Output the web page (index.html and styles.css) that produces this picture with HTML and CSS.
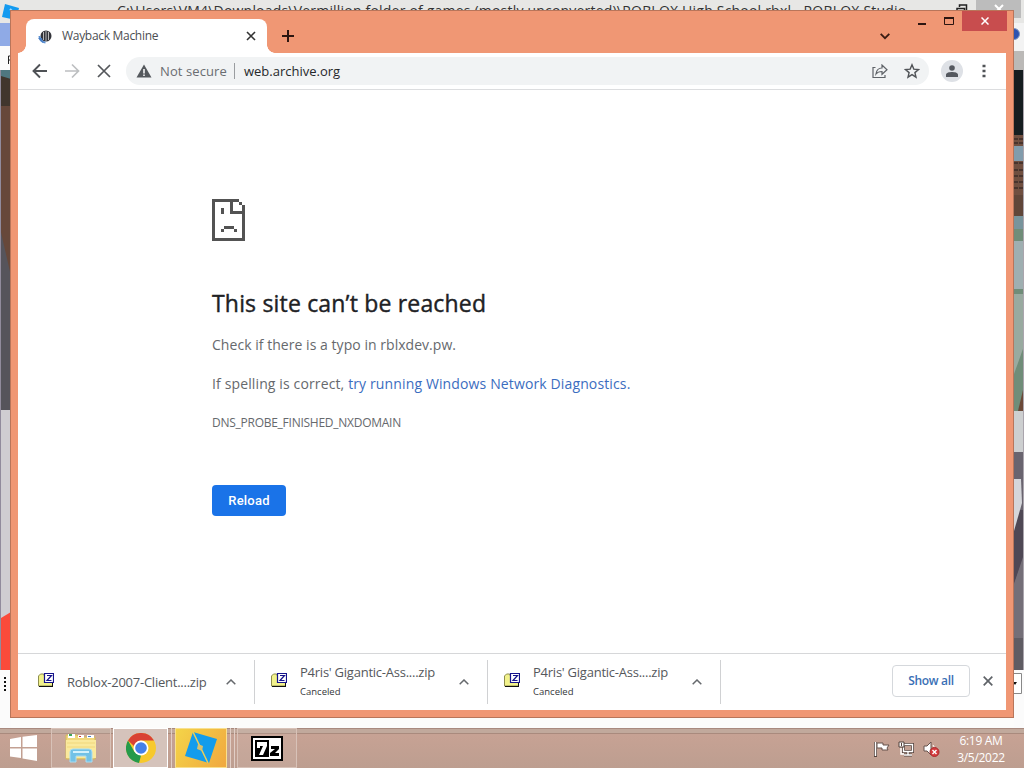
FILE: index.html
```html
<!doctype html>
<html lang="en">
<head>
  <meta charset="utf-8">
  <title>web.archive.org</title>
  <link rel="stylesheet" href="styles.css">
</head>
<body>
<div class="desktop">

  <!-- Studio window behind the browser -->
  <div class="studio">
    <div class="studio-title">
      <svg class="studio-logo" width="18" height="18" viewBox="0 0 18 18"><path d="M3 2l14 4-3 12L0 15z" fill="#149bf0"/><path d="M8 7l4 4" stroke="#a5dcff" stroke-width="2"/></svg>
      <span class="studio-path">C:\Users\VM4\Downloads\Vermillion folder of games (mostly unconverted)\ROBLOX High School.rbxl - ROBLOX Studio</span>
      <svg class="studio-restore" width="12" height="12" viewBox="0 0 12 12"><path d="M3.500 3V1h7v8H9M1 4.500h7.500V12H1z" fill="none" stroke="#222" stroke-width="1.500"/></svg>
      <span class="studio-close"><svg width="10" height="10" viewBox="0 0 10 10"><path d="M1 1l8 8M9 1L1 9" stroke="#fff" stroke-width="2"/></svg></span>
    </div>
    <div class="studio-body">
      <svg width="11" height="705" viewBox="0 23 11 705">
        <path d="M0 23h11v23H0z" fill="#8faae6"/>
        <path d="M0 46h11v24H0z" fill="#fbfbfb"/>
        <path d="M8.500 64v-8H11M8.500 60H11" fill="none" stroke="#222"/>
        <path d="M0 70h11v36H0z" fill="#41362d"/>
        <path d="M1 70h10v9L1 76z" fill="#4f7780"/>
        <path d="M0 106h11v304H0z" fill="#67483a"/>
        <path d="M0 228l11 48v134H0z" fill="#56545b"/>
        <path d="M0 410h11v208H0z" fill="#cfcdd1"/>
        <path d="M1 618l10-6v58H1z" fill="#fa4b3a"/>
        <path d="M0 670h11v58H0z" fill="#fbfbfb"/>
        <path d="M5 677v14" stroke="#111" stroke-width="2" stroke-dasharray="2"/>
        <path d="M0 70h1v600H0z" fill="#918b9c"/>
      </svg>
      <svg width="10" height="705" viewBox="1014 23 10 705">
        <path d="M1014 23h10v28h-10z" fill="#f3f3f3"/>
        <circle cx="1014" cy="34" r="5.500" fill="#2d53b0" stroke="#8296be"/>
        <path d="M1014 51h10v19h-10z" fill="#bbb9b7"/>
        <path d="M1014 70h10v65h-10z" fill="#151d20"/>
        <path d="M1014 135h10v11h-10zM1014 161h10v34h-10z" fill="#704f40"/>
        <path d="M1014 146h10v15h-10z" fill="#829cac"/>
        <path d="M1014 139h10M1014 143h10M1014 163h10M1014 170h10M1014 176h10M1014 182h10M1014 188h10" stroke="#3c2c27" stroke-width="1.500" stroke-dasharray="4 1"/>
        <path d="M1014 195h10v21h-10z" fill="#604639"/>
        <path d="M1014 216h10v13h-10z" fill="#78949c"/>
        <path d="M1014 229h10v182h-10z" fill="#708d79"/>
        <path d="M1014 241h10v48h-10z" fill="#9fafb1"/>
        <path d="M1014 294h10v52l-10 28z" fill="#99aaa0"/>
        <path d="M1023 390l-5 21h6v-21z" fill="#6b4938"/>
        <path d="M1014 411h10v41h-10z" fill="#cdcfd0"/>
        <path d="M1014 452h10v132h-10z" fill="#69646f"/>
        <path d="M1014 510h10v47l-10 27z" fill="#4f4855"/>
        <path d="M1014 479h7l1 24-8 28z" fill="#d5d6da"/>
        <path d="M1023 557v112h-9v-85z" fill="#746f78"/>
        <path d="M1014 638h10v32h-10z" fill="#5f5c63"/>
        <path d="M1014 670h10v58h-10z" fill="#fbfbfb"/>
        <path d="M1013 673.500h8.500v20H1013" fill="#fff" stroke="#888"/>
        <path d="M1013 682h4l-2 3z" fill="#111"/>
        <path d="M1023 70h1v600h-1z" fill="#aaa5ad"/>
      </svg>
    </div>
  </div>

  <div class="browser">
    <div class="tabstrip">
      <div class="tab">
        <svg class="tab-icon" width="16" height="16" viewBox="0 0 16 16"><circle cx="9" cy="8" r="5.500" fill="#33343a"/><path d="M6.500 4v8M9 3v10M11.500 4v8" stroke="#b9b9b9"/><path d="M2.500 8c0 4 2 6 6 6.500" fill="none" stroke="#5b8fd0" stroke-width="2"/><path d="M1 10l5 5-1-5z" fill="#477dc4"/></svg>
        <span class="tab-title">Wayback Machine</span>
        <svg width="10" height="10" viewBox="0 0 10 10"><path d="M1 1l8 8M9 1L1 9" stroke="#333" stroke-width="1.600"/></svg>
      </div>
      <svg class="new-tab" width="12" height="12" viewBox="0 0 12 12"><path d="M6 0v12M0 6h12" stroke="#2d1510" stroke-width="2"/></svg>
      <svg class="tab-search" width="10" height="7" viewBox="0 0 10 7"><path d="M.7.800L5 5.200 9.300.8" fill="none" stroke="#3a1c13" stroke-width="1.800"/></svg>
      <div class="win-buttons">
        <svg class="win-min" width="8" height="3" viewBox="0 0 8 3"><path d="M0 0h8v2H0z" fill="#2d1510"/></svg>
        <svg class="win-max" width="10" height="8" viewBox="0 0 10 8"><path d="M.5 1h9v6.500h-9z" fill="none" stroke="#2d1510"/><path d="M0 0h10v2H0z" fill="#2d1510"/></svg>
        <span class="win-close"><svg width="8" height="8" viewBox="0 0 8 8"><path d="M.5.500l7 7M7.500.500l-7 7" stroke="#fff" stroke-width="1.500"/></svg></span>
      </div>
    </div>

    <div class="toolbar">
      <svg width="16" height="16" viewBox="0 0 16 16"><path d="M15 8H2M8 1.500L1.500 8 8 14.500" fill="none" stroke="#4f5256" stroke-width="1.900"/></svg>
      <svg width="16" height="16" viewBox="0 0 16 16"><path d="M1 8h13M8 1.500L14.500 8 8 14.500" fill="none" stroke="#bdbfc1" stroke-width="1.700"/></svg>
      <svg width="16" height="16" viewBox="0 0 16 16"><path d="M2 2l12 12M14 2L2 14" stroke="#54575b" stroke-width="1.700"/></svg>
      <div class="omnibox">
        <svg width="16" height="14" viewBox="0 0 16 14"><path d="M8 .5L15.500 13.500H.5z" fill="#55595d"/><path d="M8 5v4.500M8 10.500V12" stroke="#fff" stroke-width="1.500"/></svg>
        <span class="not-secure">Not secure</span>
        <span class="address">web.archive.org</span>
        <svg class="share" width="16" height="14" viewBox="0 0 16 14"><path d="M3.500 3.500H1v10h12V11" fill="none" stroke="#5f6368" stroke-width="1.200"/><path d="M4 10c.5-4 2.700-6 6-6V1l5 4.700-5 4.600V7.500C7.500 7.500 5.500 8 4 10z" fill="none" stroke="#5f6368" stroke-width="1.200"/></svg>
        <svg width="16" height="16" viewBox="0 0 16 16"><path d="M8 1.800l1.800 4.300 4.700.4-3.600 3.100 1.100 4.600L8 11.700l-4 2.500 1.100-4.600L1.500 6.500l4.700-.4z" fill="none" stroke="#505357" stroke-width="1.400"/></svg>
      </div>
      <span class="avatar"><svg width="12" height="12" viewBox="0 0 12 12"><circle cx="6" cy="3" r="2.800" fill="#54585f"/><path d="M0 12V9.600C0 7.500 3.500 6.900 6 6.900s6 .6 6 2.700V12z" fill="#54585f"/></svg></span>
      <svg width="4" height="14" viewBox="0 0 4 14"><path d="M.5.700h3v2.600h-3zM.5 5.700h3v2.600h-3zM.5 10.700h3v2.600h-3z" fill="#505357"/></svg>
    </div>

    <div class="page">
      <svg class="sad" width="33" height="42" viewBox="0 0 11 14" shape-rendering="crispEdges"><path d="M0 0h9v1H1v12h9V5H6V1h1v3h3V2h1v12H0zM9 1h1v1H9zM3 3h1v2H3zM4 9h3.300v1H4zM3 10h1v1H3zM7.300 10h1v1h-1z" fill="#535353"/></svg>
      <h1>This site can’t be reached</h1>
      <p class="hint">Check if there is a typo in rblxdev.pw.</p>
      <p class="hint spelling">If spelling is correct, <a href="#">try running Windows Network Diagnostics.</a></p>
      <p class="error-code">DNS_PROBE_FINISHED_NXDOMAIN</p>
      <button class="reload">Reload</button>
    </div>

    <div class="downloads">
      <div class="download">
        <svg class="zip" width="16" height="14" viewBox="0 0 16 14"><use href="#zip-icon"/></svg>
        <div class="file"><span class="name">Roblox-2007-Client....zip</span></div>
        <svg class="caret" width="10" height="6" viewBox="0 0 10 6"><path d="M.7 5.300L5 1l4.300 4.300" fill="none" stroke="#66696d" stroke-width="1.500"/></svg>
      </div>
      <div class="download">
        <svg class="zip" width="16" height="14" viewBox="0 0 16 14"><use href="#zip-icon"/></svg>
        <div class="file canceled"><span class="name">P4ris' Gigantic-Ass....zip</span><span class="state">Canceled</span></div>
        <svg class="caret" width="10" height="6" viewBox="0 0 10 6"><path d="M.7 5.300L5 1l4.300 4.300" fill="none" stroke="#66696d" stroke-width="1.500"/></svg>
      </div>
      <div class="download">
        <svg class="zip" width="16" height="14" viewBox="0 0 16 14"><use href="#zip-icon"/></svg>
        <div class="file canceled"><span class="name">P4ris' Gigantic-Ass....zip</span><span class="state">Canceled</span></div>
        <svg class="caret" width="10" height="6" viewBox="0 0 10 6"><path d="M.7 5.300L5 1l4.300 4.300" fill="none" stroke="#66696d" stroke-width="1.500"/></svg>
      </div>
      <button class="show-all">Show all</button>
      <svg class="close-bar" width="10" height="10" viewBox="0 0 10 10"><path d="M.7.700l8.600 8.600M9.300.700L.7 9.300" stroke="#5f6368" stroke-width="1.700"/></svg>
    </div>
  </div>

  <div class="taskbar">
    <div class="start"><svg width="27" height="26" viewBox="0 0 27 26"><path d="M0 4l11-2v10H0zM12.500 1.700L27 0v12H12.500zM0 13.500h11V23L0 21.500zM12.500 13.500H27V26l-14.500-2.500z" fill="#fff"/></svg></div>
    <div class="task explorer">
      <svg width="32" height="30" viewBox="0 0 32 30"><path d="M1 2h11l2 2h16v22H1z" fill="#f1d77b" stroke="#d2b85c"/><path d="M3 1h7v4H3zM13 2h6v3h-6zM22 2h7v3h-7z" fill="#fff"/><path d="M4 1h3v2H4z" fill="#42a65a"/><path d="M14 3h2v1h-2z" fill="#c33"/><path d="M23 3h3v1h-3z" fill="#4a7fc4"/><path d="M1 7h30v18H1z" fill="#fae99c"/><path d="M2 10h28M2 14h28" stroke="#f0d77c"/><path d="M5 29V19q0-3 3-3h16q3 0 3 3v10h-6v-6H11v6z" fill="#72c2e6" stroke="#a9ddf2"/><path d="M8 19h16" stroke="#d3f1fb" stroke-width="2"/></svg>
    </div>
    <div class="task chrome">
      <svg width="30" height="30" viewBox="0 0 30 30"><circle cx="15" cy="15" r="15" fill="#f7c92c"/><path d="M2 7.500L8.500 19 15 22.500 13 30A15 15 0 0 1 2 7.500z" fill="#249a4c"/><path d="M2 7.500A15 15 0 0 1 28 7.500H15q-5 0-6.500 6z" fill="#d94235"/><circle cx="15" cy="15" r="7.500" fill="#fff"/><circle cx="15" cy="15" r="5.800" fill="#4580e8"/></svg>
    </div>
    <div class="task-stack"></div>
    <div class="task roblox">
      <svg width="32" height="32" viewBox="0 0 32 32"><path d="M8 0l24 7-8 24L0 24z" fill="#139cec"/><path d="M8 0l15 31" stroke="#efcf55" stroke-width="1.500"/><path d="M13 12l5 2-1 5-5-2z" fill="#d8c16e"/></svg>
    </div>
    <div class="task-stack"></div>
    <div class="task-stack"></div>
    <div class="task seven">
      <svg width="32" height="25" viewBox="0 0 32 25"><path d="M0 0h32v25H0z" fill="#000"/><path d="M2 2h28v21H2z" fill="#fff"/><path d="M4 4h14v17H4z" fill="#000"/><path d="M6 6h10v4l-4 9H8l4-9H9v2H6z" fill="#fff"/><path d="M20 10h8v3l-4 4h4v3h-9v-3l5-4h-4z" fill="#000"/></svg>
    </div>
    <div class="tray">
      <svg width="16" height="16" viewBox="0 0 16 16"><path d="M1.500 1v15" stroke="#53423c" stroke-width="3"/><path d="M3 2h6v2h6l-2 3 1 2H8V7H3z" fill="#fff" stroke="#66534c"/><path d="M1.500 1v14" stroke="#fff" stroke-width="1.500"/></svg>
      <svg width="17" height="16" viewBox="0 0 17 16"><path d="M5.500 3.500h9v7h-9zM10 10v4M6 14h8" fill="none" stroke="#53423c" stroke-width="3"/><path d="M5.500 3.500h9v7h-9zM10 10v4M6 14h8M3 7v6h3" fill="none" stroke="#fff" stroke-width="1.400"/><path d="M1 1h5v5H1z" fill="#fff" stroke="#53423c"/><path d="M3.500 2v3" stroke="#53423c"/></svg>
      <svg width="17" height="16" viewBox="0 0 17 16"><path d="M1 5h3l4-4v13l-4-4H1z" fill="#fff" stroke="#66534c"/><path d="M10 4q2 2 1 5" fill="none" stroke="#fff"/><circle cx="11.500" cy="11" r="4.500" fill="#d53a3c" stroke="#a82d2f"/><path d="M9.500 9l4 4M13.500 9l-4 4" stroke="#fff" stroke-width="1.400"/></svg>
    </div>
    <div class="clock"><span>6:19 AM</span><span>3/5/2022</span></div>
  </div>
</div>

<svg class="defs" width="0" height="0">
  <symbol id="zip-icon" viewBox="0 0 16 14">
    <path d="M.5 3l2-2h3l1 2h8v10H.5z" fill="#f2f28c" stroke="#8e8e4d"/>
    <path d="M1 13.500h14M14.500 10v4" stroke="#111"/>
    <path d="M6.500.500h9v9h-9z" fill="#fff" stroke="#15138c" stroke-width="1.200"/>
    <path d="M9 2.500h4.500l-4.500 5h4.500" fill="none" stroke="#15138c" stroke-width="1.200"/>
  </symbol>
</svg>
</body>
</html>
```
FILE: styles.css
```css
:root {
  --frame: #f09774;
  --frame-line: #b9755a;
  --ui-font: "Open Sans", "Noto Sans", sans-serif;
}
* { box-sizing: border-box; }
body { margin: 0; font-family: var(--ui-font); overflow: hidden; }
svg { display: block; flex: none; }
span { white-space: nowrap; }
.defs { position: absolute; }

.desktop {
  position: relative;
  display: flex; flex-direction: column;
  width: 1024px; height: 768px;
  background: #fcfcfb;
}

/* studio window */
.studio { height: 728px; display: flex; flex-direction: column; }
.studio-title {
  display: flex; align-items: flex-start;
  height: 23px; padding-left: 2px;
  background: #e7e7e5;
}
.studio-logo { margin-top: 2px; }
.studio-path {
  width: 794px; margin-left: 97px;
  font-size: 14px; line-height: 22px; letter-spacing: 0.2px; color: #333;
}
.studio-restore { margin: 4px 0 0 45px; }
.studio-close {
  display: flex; justify-content: center;
  width: 45px; height: 18px; margin-left: 8px; padding-top: 4px;
  background: #bcbcbc;
}
.studio-body { display: flex; justify-content: space-between; }

/* browser window */
.browser {
  position: absolute; left: 10px; top: 10px;
  display: flex; flex-direction: column;
  width: 1004px; height: 708px;
  padding: 0 7px 7px;
  background: var(--frame);
  border: 1px solid var(--frame-line);
}
.tabstrip { display: flex; height: 42px; padding-left: 8px; }
.tab {
  position: relative;
  display: flex; align-items: center;
  flex: none; width: 241px; height: 34px; margin-top: 8px; padding: 0 11px;
  background: #fff;
  border-radius: 8px 8px 0 0;
}
.tab::before, .tab::after {
  content: ""; position: absolute; bottom: 0;
  width: 8px; height: 8px;
}
.tab::before { left: -8px; background: radial-gradient(circle at 0 0, transparent 7.5px, #fff 8px); }
.tab::after { right: -8px; background: radial-gradient(circle at 100% 0, transparent 7.5px, #fff 8px); }
.tab-title {
  flex: 1; margin-left: 9px; padding-bottom: 1px;
  font-size: 12px; letter-spacing: -0.3px; color: #4b4e52;
}
.new-tab { margin: 19px 0 0 15px; }
.tab-search { margin: 22px 0 0 586px; }
.win-buttons { display: flex; margin-left: 28px; }
.win-min { margin-top: 12px; }
.win-max { margin: 6px 0 0 18px; }
.win-close {
  display: flex; align-items: center; justify-content: center;
  width: 45px; height: 20px; margin-left: 8px;
  background: #c84d4e;
}
.toolbar {
  display: flex; align-items: center; gap: 16px;
  height: 37px; padding: 0 20px 0 14px;
  background: #fff; border-bottom: 1px solid #dcdddf;
}
.omnibox {
  flex: 1; display: flex; align-items: center;
  height: 28px; margin-left: -2px; margin-right: -4px; padding: 0 9px 0 10px;
  background: #f1f3f4; border-radius: 14px;
  font-size: 13px;
}
.not-secure {
  margin-left: 8px; padding-right: 7px;
  border-right: 1px solid #9a9da0;
  line-height: 16px; letter-spacing: 0.1px; color: #6a6d71;
}
.address { flex: 1; margin-left: 9px; color: #26282b; }
.share { margin-right: 16px; }
.avatar {
  display: flex; align-items: center; justify-content: center;
  width: 22px; height: 22px; margin-right: 3px;
  background: #dee1e6; border-radius: 50%;
}

/* error page */
.page {
  flex: 1; display: flex; flex-direction: column; align-items: flex-start;
  padding: 109px 0 0 194px;
  background: #fff; color: #66696d;
}
h1 {
  margin: 46px 0 0;
  font-size: 23px; line-height: 32px; font-weight: 500; letter-spacing: 0.18px;
  color: #202124;
  -webkit-text-stroke: 0.4px #202124;
}
p { margin: 0; white-space: nowrap; }
.hint { margin-top: 15px; font-size: 14px; line-height: 22px; letter-spacing: 0.04px; }
.spelling { margin-top: 17px; letter-spacing: 0.13px; }
.hint a { color: #3b6dc0; text-decoration: none; }
.error-code { margin-top: 18px; font-size: 12px; line-height: 20px; letter-spacing: -0.26px; }
.reload {
  width: 74px; height: 31px; margin-top: 52px; padding: 0;
  border: 0; border-radius: 4px;
  background: #1a73e8; color: #fff;
  font: 500 13px Roboto, sans-serif; letter-spacing: 0.2px;
}

/* download shelf */
.downloads {
  display: flex; align-items: center;
  height: 57px; padding-right: 13px;
  background: #fff; border-top: 1px solid #d6d7d9;
}
.download {
  display: flex; align-items: center;
  width: 233px; height: 44px; padding: 0 18px 0 16px;
  border-right: 1px solid #d0d1d3;
}
.download:first-child { width: 237px; padding-left: 20px; }
.zip { margin-top: -4px; }
.file { flex: 1; display: flex; flex-direction: column; margin-left: 13px; color: #55585c; }
.canceled { margin-top: -1px; }
.name { font-size: 13px; line-height: 20px; letter-spacing: -0.24px; }
.state { font-size: 9.5px; line-height: 20px; color: #35373a; }
.show-all {
  width: 78px; height: 32px; margin: -2px 0 0 auto; padding: 0 0 1px;
  background: #fff; border: 1px solid #d5d8dc; border-radius: 4px;
  font: 600 12px var(--ui-font); letter-spacing: -0.3px; color: #3a6fb5;
}
.close-bar { margin: -2px 0 0 13px; }

/* taskbar */
.taskbar {
  display: flex; align-items: stretch;
  height: 40px; padding-left: 10px;
  background: linear-gradient(#a98a7f 0 1px, #c1a99c 1px 5px, #a98a7d 5px 6px, #c7a294 6px, #bd9e90);
}
.start { width: 41px; padding-top: 7px; }
.task {
  display: flex; align-items: center; justify-content: center;
  border: 1px solid #d8c2b8;
  background: rgba(255, 255, 255, 0.08);
}
.explorer { width: 60px; margin-right: 2px; }
.chrome { width: 55px; border: 1px solid #fff; background: #d5c3bb; }
.task-stack { width: 4px; border-right: 1px solid #e1cec6; }
.roblox { width: 52px; margin-left: 3px; border-color: #f8e090; background: linear-gradient(120deg, #f4d448, #f0a840); }
.seven { width: 60px; margin-left: 2px; }
.tray { display: flex; gap: 8px; margin-left: auto; padding-top: 13px; }
.clock {
  display: flex; flex-direction: column; align-items: center;
  width: 82px; padding: 4px 0 0; margin-right: 2px;
  font-size: 12px; line-height: 17px; letter-spacing: -0.3px; color: #fff;
}
```
